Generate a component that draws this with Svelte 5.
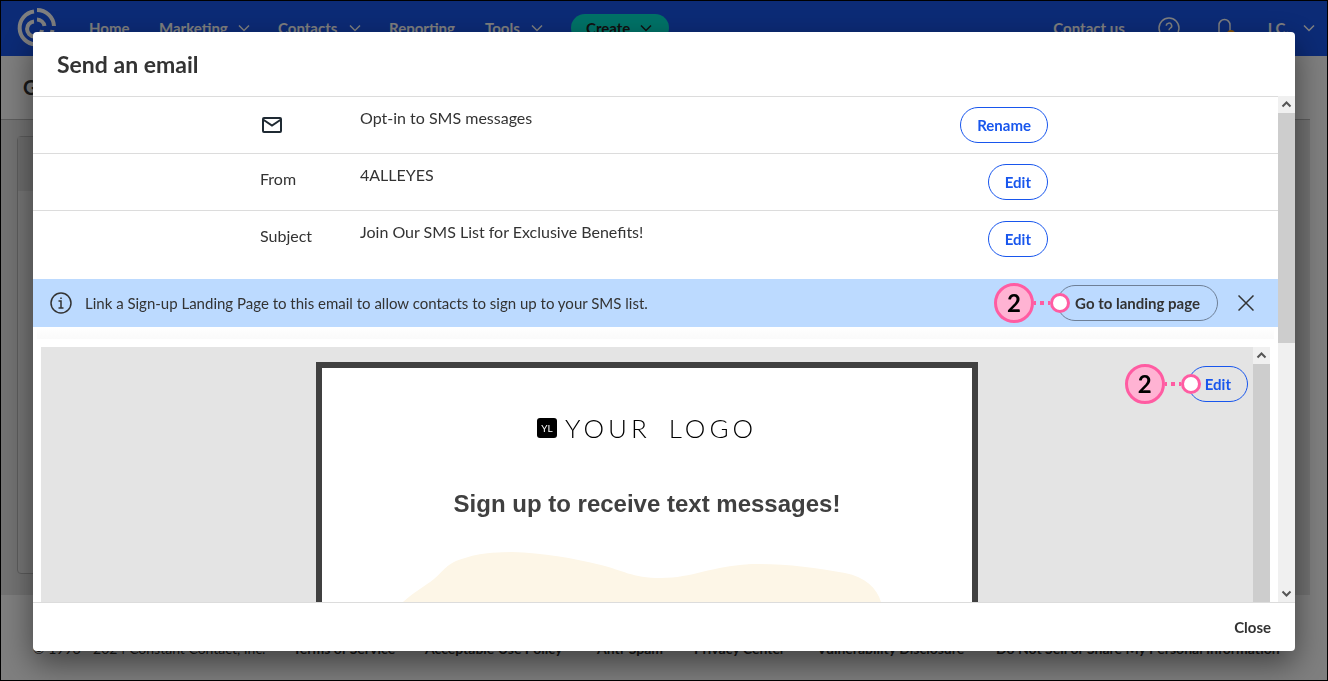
<script>
    let showBanner = $state(true);
    let open = $state(true);

    const nav = [
        { label: 'Home', menu: false },
        { label: 'Marketing', menu: true },
        { label: 'Contacts', menu: true },
        { label: 'Reporting', menu: false },
        { label: 'Tools', menu: true }
    ];

    const rows = [
        { label: '', value: 'Opt-in to SMS messages', action: 'Rename' },
        { label: 'From', value: '4ALLEYES', action: 'Edit' },
        { label: 'Subject', value: 'Join Our SMS List for Exclusive Benefits!', action: 'Edit' }
    ];

    const legal = [
        'Terms of Service',
        'Acceptable Use Policy',
        'Anti-Spam',
        'Privacy Center',
        'Vulnerability Disclosure',
        'Do Not Sell or Share My Personal Information'
    ];
</script>

{#snippet chevron()}
    <svg class="chevron" viewBox="0 0 12 8" width="12" height="8" aria-hidden="true">
        <path d="M1 1.500 6 6.500 11 1.500" />
    </svg>
{/snippet}

{#snippet step(n)}
    <span class="step">
        <span class="step-number">{n}</span>
        <span class="step-line"></span>
        <span class="step-end"></span>
    </span>
{/snippet}

{#snippet arrow(down)}
    <svg class="arrow" class:down viewBox="0 0 17 17" width="17" height="17" aria-hidden="true">
        <path d="M4.500 10.500 8.500 6.500 12.500 10.500" />
    </svg>
{/snippet}

<div class="page">
    <header class="topbar">
        <svg class="brand" viewBox="0 0 40 40" width="40" height="40" aria-hidden="true">
            <path d="M18 3.500A16.500 16.500 0 1 0 36.500 22" />
            <path d="M21 2A17 17 0 0 1 38 18" />
            <path d="M18 13.500A7.500 7.500 0 1 0 26 22" />
            <path d="M21 11.500A8 8 0 0 1 28.500 18" />
        </svg>
        <nav class="nav">
            {#each nav as item}
                <a href="#top">{item.label}{#if item.menu}{@render chevron()}{/if}</a>
            {/each}
            <button class="create">Create {@render chevron()}</button>
        </nav>
        <div class="tools">
            <a href="#contact">Contact us</a>
            <svg viewBox="0 0 22 22" width="22" height="22" aria-hidden="true">
                <circle cx="11" cy="11" r="10" />
                <path d="M8.300 8.800a2.700 2.700 0 1 1 4 2.400c-.9.5-1.300.9-1.300 2M11 15v1.500" />
            </svg>
            <svg viewBox="0 0 22 22" width="22" height="22" aria-hidden="true">
                <path d="M4 17h15M6 17V8a5.500 5.500 0 0 1 11 0v9" />
                <circle class="dot" cx="18" cy="17" r="4" />
            </svg>
            <a class="user" href="#account">I.C. {@render chevron()}</a>
        </div>
    </header>
    <main class="main">
        <h1>Give</h1>
        <div class="area">
            <div class="card"><div class="card-head"></div></div>
        </div>
    </main>
    <footer class="legal">
        <span>© 1996 - 2024 Constant Contact, Inc.</span>
        {#each legal as item}
            <a href="#legal">{item}</a>
        {/each}
    </footer>
</div>

{#if open}
    <div class="overlay">
        <div class="modal" role="dialog" aria-labelledby="title">
            <h2 id="title">Send an email</h2>
            <div class="body">
                <div class="content">
                    <div class="rows">
                        {#each rows as row}
                            <div class="row">
                                <div class="label">
                                    {#if row.label}
                                        {row.label}
                                    {:else}
                                        <svg viewBox="0 0 24 24" width="24" height="24" aria-hidden="true">
                                            <rect x="3" y="5" width="18" height="14" rx="1" />
                                            <path d="M3 6.500 12 12.500 21 6.500" />
                                        </svg>
                                    {/if}
                                </div>
                                <div class="value">{row.value}</div>
                                <button class="pill">{row.action}</button>
                            </div>
                        {/each}
                    </div>

                    {#if showBanner}
                        <div class="banner">
                            <svg viewBox="0 0 22 22" width="22" height="22" aria-hidden="true">
                                <circle cx="11" cy="11" r="10" />
                                <path d="M8.500 9H11v7M8.500 16h5M11 5.500v1.500" />
                            </svg>
                            <p>Link a Sign-up Landing Page to this email to allow contacts to sign up to your SMS list.</p>
                            <button class="pill dark">Go to landing page{@render step(2)}</button>
                            <button class="dismiss" aria-label="Dismiss" onclick={() => (showBanner = false)}>
                                <svg viewBox="0 0 16 16" width="16" height="16" aria-hidden="true">
                                    <path d="M.5.5l15 15M15.500.5l-15 15" />
                                </svg>
                            </button>
                        </div>
                    {/if}

                    <div class="divider"></div>

                    <div class="preview">
                        <div class="canvas">
                            <div class="email">
                                <div class="logo">
                                    <span class="mark">YL</span>
                                    <span class="name"><span>YOUR</span> <span>LOGO</span></span>
                                </div>
                                <h3>Sign up to receive text messages!</h3>
                                <svg class="blob" viewBox="0 0 490 90" width="490" height="90" aria-hidden="true">
                                    <path d="M-3 60 8 50C18 41 30 34 39 27C49 19 51 11 70 6C85 1 101 0 117 0C148 1 178 6 206 13C227 18 237 26 266 26C300 26 320 12 364 12C395 12 422 16 450 21C470 25 482 36 486 50L488 90H-3Z" />
                                </svg>
                            </div>
                        </div>
                        <div class="scroll">{@render arrow(false)}<div class="thumb tall"></div></div>
                        <button class="pill floating">Edit{@render step(2)}</button>
                    </div>
                </div>
                <div class="scroll">
                    {@render arrow(false)}
                    <div class="thumb"></div>
                    {@render arrow(true)}
                </div>
            </div>
            <div class="actions">
                <button onclick={() => (open = false)}>Close</button>
            </div>
        </div>
    </div>
{/if}

<style>
    :global(body) {
        font-family: Lato, "Open Sans", sans-serif;
        color: #333;
        overflow: hidden;
    }
    * {
        box-sizing: border-box;
    }
    h1, h2, h3, p {
        margin: 0;
    }
    a {
        color: inherit;
        text-decoration: none;
    }
    button {
        font-family: inherit;
        cursor: pointer;
    }
    svg {
        display: block;
        flex: none;
        fill: none;
        stroke: currentColor;
        stroke-width: 1.5;
    }

    /* page behind the dialog */
    .page {
        display: flex;
        flex-direction: column;
        height: 100vh;
        background: #fff;
    }
    .topbar {
        display: flex;
        align-items: center;
        height: 56px;
        padding: 0 13px 0 16px;
        background: #1856ed;
        color: #fff;
        font-size: 15px;
        font-weight: 700;
    }
    .brand {
        stroke-width: 4;
    }
    .nav {
        display: grid;
        grid-template-columns: 42px 91px 83px 68px 58px 98px;
        column-gap: 28px;
        align-items: center;
        margin-left: 33px;
    }
    .nav a {
        display: flex;
        align-items: center;
        justify-content: space-between;
    }
    .create {
        display: flex;
        align-items: center;
        justify-content: space-between;
        height: 28px;
        padding: 0 17px 0 15px;
        border: none;
        border-radius: 14px;
        background: #00e5cf;
        color: #222;
        font-size: 15px;
        font-weight: 700;
    }
    .tools {
        display: flex;
        align-items: center;
        gap: 33px;
        margin-left: auto;
    }
    .tools .dot {
        fill: #ff9e1a;
        stroke: none;
    }
    .user {
        display: flex;
        align-items: center;
        gap: 14px;
    }
    .main {
        display: flex;
        flex: 1;
        flex-direction: column;
        margin-right: 18px;
    }
    h1 {
        height: 64px;
        padding-left: 23px;
        border-bottom: 1px solid #bbb;
        font-size: 20px;
        line-height: 63px;
    }
    .area {
        display: flex;
        flex: 1;
        padding: 16px 16px 21px 17px;
        background: #e6e6e6;
    }
    .card {
        flex: 1;
        border: 1px solid #bbb;
        border-radius: 4px;
        background: #eee;
    }
    .card-head {
        height: 54px;
        background: #dcdcdc;
    }
    .legal {
        display: grid;
        grid-template-columns: 234px 106px 146px 71px 97px 153px 299px;
        column-gap: 26px;
        align-items: end;
        height: 86px;
        padding: 0 33px 22px;
        font-size: 14px;
        line-height: 20px;
        white-space: nowrap;
    }
    .legal a {
        font-weight: 700;
    }

    /* dialog */
    .overlay {
        position: fixed;
        inset: 0;
        display: flex;
        padding: 31px 32px 29px;
        border: 1px solid #000;
        background: rgba(0, 0, 0, 0.5);
    }
    .modal {
        display: flex;
        flex: 1;
        flex-direction: column;
        min-width: 0;
        overflow: hidden;
        border-radius: 4px;
        background: #fff;
        box-shadow: 0 12px 32px rgba(0, 0, 0, 0.5);
    }
    h2 {
        height: 64px;
        padding: 0 24px;
        font-size: 23px;
        line-height: 64px;
    }
    .body {
        display: flex;
        flex: 1;
        min-height: 0;
    }
    .content {
        display: flex;
        flex: 1;
        flex-direction: column;
        min-width: 0;
        border-top: 1px solid #dcdcdc;
    }
    .rows {
        padding-bottom: 12px;
    }
    .row {
        display: grid;
        grid-template-columns: 100px 1fr auto;
        padding: 10px 230px 10px 227px;
        font-size: 16px;
        line-height: 22px;
    }
    .row + .row {
        border-top: 1px solid #dcdcdc;
    }
    .label {
        line-height: 30px;
    }
    .label svg {
        margin: 6px 0;
        stroke: #1f2a33;
        stroke-width: 2;
    }
    .pill {
        position: relative;
        height: 36px;
        padding: 0 16px;
        border: 1px solid #1856ed;
        border-radius: 18px;
        background: transparent;
        color: #1856ed;
        font-size: 15px;
        font-weight: 700;
        white-space: nowrap;
    }
    .banner {
        display: flex;
        flex: none;
        align-items: center;
        height: 48px;
        padding: 0 24px 0 17px;
        background: #bcdaff;
    }
    .banner p {
        flex: 1;
        margin-left: 13px;
        font-size: 15px;
        line-height: 20px;
    }
    .pill.dark {
        padding: 0 17px;
        border-color: #6e7f96;
        color: #333;
    }
    .dismiss {
        margin-left: 20px;
        padding: 0;
        border: none;
        background: none;
        color: #333;
    }
    .divider {
        flex: none;
        height: 12px;
        margin: 0 4px;
        background: linear-gradient(#fff, #fafafa);
    }
    .step {
        position: absolute;
        top: -3px;
        right: calc(100% - 12px);
        display: flex;
        align-items: center;
        width: 76px;
    }
    .step-number {
        width: 40px;
        height: 40px;
        border: 3px solid #ff5ca2;
        border-radius: 50%;
        background: #ffb3d3;
        color: #000;
        font-size: 24px;
        line-height: 34px;
        text-align: center;
    }
    .step-line {
        flex: 1;
        height: 4px;
        background: repeating-linear-gradient(90deg, #ff5ca2 0 2px, transparent 2px 6px, #ff5ca2 6px 8px);
    }
    .step-end {
        width: 20px;
        height: 20px;
        border: 3px solid #ff5ca2;
        border-radius: 50%;
        background: #fff;
    }
    .preview {
        position: relative;
        display: flex;
        flex: 1;
        min-height: 0;
        margin: 8px 8px 0;
        overflow: hidden;
    }
    .canvas {
        flex: 1;
        padding-top: 15px;
        background: #e4e4e4;
    }
    .email {
        width: 662px;
        height: 600px;
        margin: 0 auto;
        padding-top: 44px;
        border: 6px solid #404040;
        background: #fff;
    }
    .logo {
        display: flex;
        align-items: center;
        justify-content: center;
        gap: 8px;
        color: #000;
        line-height: 32px;
    }
    .mark {
        width: 20px;
        height: 20px;
        border-radius: 3px;
        background: #000;
        color: #fff;
        font-size: 10px;
        line-height: 20px;
        text-align: center;
    }
    .name {
        display: flex;
        gap: 18px;
        font-size: 26px;
        font-weight: 300;
        letter-spacing: 4px;
    }
    h3 {
        margin-top: 44px;
        color: #404040;
        font-family: "Liberation Sans", Arial, sans-serif;
        font-size: 24px;
        line-height: 32px;
        text-align: center;
    }
    .blob {
        margin: 32px 0 0 73px;
        fill: #fdf6e7;
        stroke: none;
    }
    .floating {
        position: absolute;
        top: 19px;
        right: 22px;
    }
    .scroll {
        display: flex;
        flex: none;
        flex-direction: column;
        width: 17px;
        background: #f0f0f0;
    }
    .thumb {
        height: 230px;
        margin-bottom: auto;
        background: #cdcdcd;
    }
    .thumb.tall {
        flex: 1;
    }
    .arrow {
        stroke: #555;
        stroke-width: 2;
    }
    .arrow.down {
        rotate: 180deg;
    }
    .actions {
        display: flex;
        justify-content: flex-end;
        height: 49px;
        padding: 0 24px;
        border-top: 1px solid #dcdcdc;
    }
    .actions button {
        padding: 0;
        border: none;
        background: none;
        color: #333;
        font-size: 15px;
        font-weight: 700;
    }
</style>
